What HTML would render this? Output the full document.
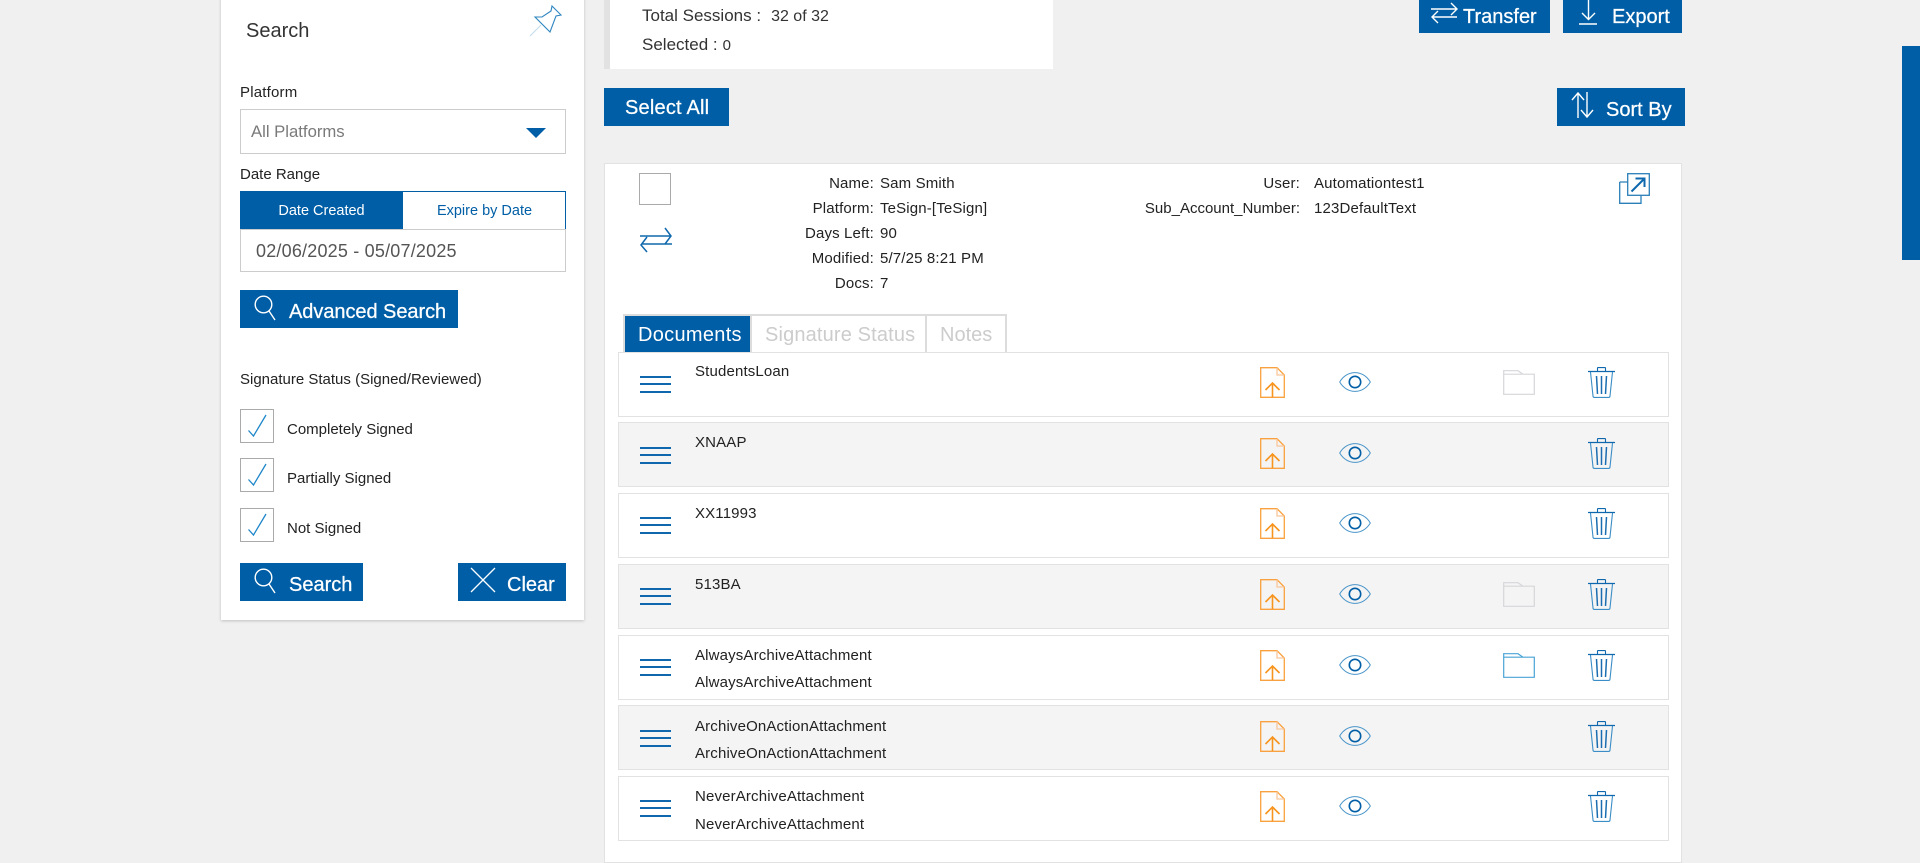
<!DOCTYPE html>
<html><head><meta charset="utf-8"><title>Sessions</title>
<style>
html,body{margin:0;padding:0;width:1920px;height:847px;overflow:hidden;background:#f0f0f0;font-family:"Liberation Sans",sans-serif;color:#222}
.a{position:absolute;box-sizing:border-box}
.t{position:absolute;white-space:nowrap;font-size:15px;line-height:20px;height:20px;letter-spacing:.15px;margin-top:1px}
.s{letter-spacing:0}
.b{position:absolute;background:#005ea6}
.w{color:#fff;font-size:20px;line-height:24px;height:24px;letter-spacing:0;-webkit-text-stroke:.25px #fff;margin-top:0}
.tb{font-size:20px;line-height:24px;height:24px;letter-spacing:.15px;margin-top:0}
svg{position:absolute;overflow:visible}
.row{position:absolute;left:618px;width:1051px;height:65px;box-sizing:border-box;border:1.5px solid #e2e2e2;background:#fff}
.alt{background:#f4f4f4}
.hl{position:absolute;left:640px;width:31px;height:2px;background:#0f68ad}
.cb{position:absolute;left:240px;width:34px;height:34px;box-sizing:border-box;border:1.5px solid #aaa;background:#fff}
</style></head><body>
<svg width="0" height="0" style="position:absolute"><defs>
<symbol id="doc" viewBox="0 0 25 31"><path d="M.7.7H17L24.3 8V30.3H.7Z" fill="none" stroke="#f9a13e" stroke-width="1.3"/><path d="M17 .7V8H24.3" fill="none" stroke="#fbc79a" stroke-width="1.3"/><path d="M12.5 30V16M5.5 23L12.5 16L19.5 23" fill="none" stroke="#f7941d" stroke-width="1.6"/></symbol>
<symbol id="eye" viewBox="0 0 32 20"><path d="M.7 10C8-2.5 24-2.5 31.300 10C24 22.500 8 22.500 .7 10Z" fill="none" stroke="#4a95c9" stroke-width="1"/><circle cx="16" cy="10" r="5.700" fill="none" stroke="#005ea6" stroke-width="1.600"/></symbol>
<symbol id="tr" viewBox="0 0 27 31"><path d="M0 4.500H27" stroke="#0f68ad" stroke-width="1.200" fill="none"/><path d="M9.500 4V1.200Q9.500.6 10 .6H17Q17.500.6 17.500 1.200V4" stroke="#0f68ad" stroke-width="1.100" fill="none"/><path d="M2.500 5L5 29Q5 30.400 6.500 30.400H20.500Q22 30.400 22 29L24.500 5" stroke="#3a8dc6" stroke-width="1.100" fill="none"/><path d="M8.500 9L9.500 27M13.500 9V27M18.500 9L17.500 27" stroke="#1a6db0" stroke-width="1.500" fill="none"/></symbol>
<symbol id="fold" viewBox="0 0 32 25"><path d="M.7 .7H15L20 4.200H31.300V24.300H.7ZM.7 4.200H20" fill="none" stroke="currentColor" stroke-width="1.200"/></symbol>
<symbol id="chk" viewBox="0 0 34 34"><path d="M8.500 21.500L13.500 27L26 6" fill="none" stroke="#1d86c9" stroke-width="1.300"/></symbol>
<symbol id="mag" viewBox="0 0 22 26"><circle cx="9.500" cy="9.500" r="8.300" fill="none" stroke="#fff" stroke-width="1.400"/><path d="M15 16L21 25" stroke="#fff" stroke-width="1.400"/></symbol>
</defs></svg>

<!-- scrollbar -->
<div class="a" style="left:1902px;top:46px;width:18px;height:214px;background:#005ea6"></div>

<!-- sidebar -->
<div class="a" style="left:221px;top:-5px;width:363px;height:625px;background:#fff;box-shadow:0 1px 3px rgba(0,0,0,.2)"></div>
<div class="t" style="left:246px;top:18px;font-size:20px;line-height:24px;height:24px;color:#333;letter-spacing:0">Search</div>
<svg style="left:530px;top:5px" width="34" height="33" viewBox="0 0 34 33"><path d="M0 31L11 20" stroke="#c4dcec" stroke-width="1.100" fill="none"/><path d="M5 12H12L21 6L22 1L31 10L26 11L20 27Z" fill="none" stroke="#2e86c1" stroke-width="1.100"/></svg>
<div class="t" style="left:240px;top:82px;letter-spacing:.2px">Platform</div>
<div class="a" style="left:240px;top:109px;width:326px;height:45px;border:1.500px solid #ccc;background:#fff"></div>
<div class="t" style="left:251px;top:122px;margin-top:0;font-size:16.700px;letter-spacing:0;color:#7a7a7a">All Platforms</div>
<div class="a" style="left:526px;top:128px;width:0;height:0;border-left:10px solid transparent;border-right:10px solid transparent;border-top:10px solid #005ea6"></div>
<div class="t s" style="left:240px;top:164px">Date Range</div>
<div class="b" style="left:240px;top:191px;width:163px;height:38px"></div>
<div class="a" style="left:403px;top:191px;width:163px;height:38px;border:1px solid #005ea6;border-left:0;border-bottom:0;background:#fff"></div>
<div class="t" style="left:240px;top:200px;width:163px;text-align:center;color:#fff;font-size:14.500px;letter-spacing:0">Date Created</div>
<div class="t" style="left:403px;top:200px;width:163px;text-align:center;color:#005ea6;font-size:14.500px;letter-spacing:0">Expire by Date</div>
<div class="a" style="left:240px;top:229px;width:326px;height:43px;border:1.500px solid #ccc;border-top-width:1px;background:#fff"></div>
<div class="t" style="left:256px;top:241px;margin-top:0;font-size:18px;letter-spacing:.2px;color:#555">02/06/2025 - 05/07/2025</div>
<div class="b" style="left:240px;top:290px;width:218px;height:38px"></div>
<svg style="left:254px;top:295px" width="22" height="26"><use href="#mag"/></svg>
<div class="t w" style="left:289px;top:300px;letter-spacing:-.05px">Advanced Search</div>
<div class="t s" style="left:240px;top:369px">Signature Status (Signed/Reviewed)</div>
<div class="cb" style="top:409px"></div><svg style="left:240px;top:409px" width="34" height="34"><use href="#chk"/></svg>
<div class="t s" style="left:287px;top:419px">Completely Signed</div>
<div class="cb" style="top:458px"></div><svg style="left:240px;top:458px" width="34" height="34"><use href="#chk"/></svg>
<div class="t s" style="left:287px;top:468px">Partially Signed</div>
<div class="cb" style="top:508px"></div><svg style="left:240px;top:508px" width="34" height="34"><use href="#chk"/></svg>
<div class="t s" style="left:287px;top:518px">Not Signed</div>
<div class="b" style="left:240px;top:563px;width:123px;height:38px"></div>
<svg style="left:254px;top:568px" width="22" height="26"><use href="#mag"/></svg>
<div class="t w" style="left:289px;top:573px">Search</div>
<div class="b" style="left:458px;top:563px;width:108px;height:38px"></div>
<svg style="left:470px;top:567px" width="26" height="26"><path d="M1 1L25 25M25 1L1 25" stroke="#fff" stroke-width="1.300" fill="none"/></svg>
<div class="t w" style="left:507px;top:573px">Clear</div>

<!-- summary -->
<div class="a" style="left:604px;top:-5px;width:449px;height:74px;background:#fff;border-left:6px solid #e2e2e2"></div>
<div class="t" style="left:642px;top:5px;margin-top:0;font-size:17px;line-height:22px;height:22px;letter-spacing:0;color:#333">Total Sessions :<span style="font-size:16px;margin-left:10px">32 of 32</span></div>
<div class="t" style="left:642px;top:34px;margin-top:0;font-size:17px;line-height:22px;height:22px;letter-spacing:0;color:#333">Selected :<span style="font-size:15px;margin-left:5px">0</span></div>

<!-- top buttons -->
<div class="b" style="left:1419px;top:-2px;width:131px;height:35px"></div>
<svg style="left:1431px;top:2px" width="27" height="22" viewBox="0 0 27 22" fill="none" stroke="#fff" stroke-width="1.400"><path d="M0 7H25M20 1L26 7L20 13M26 15H1M7 9L1 15L7 21"/></svg>
<div class="t w" style="left:1463px;top:5px">Transfer</div>
<div class="b" style="left:1563px;top:-2px;width:119px;height:35px"></div>
<svg style="left:1579px;top:0" width="19" height="25" viewBox="0 0 19 25" fill="none" stroke="#fff" stroke-width="1.400"><path d="M9.500 0V19M3 13L9.500 19.500L16 13M0 24H18"/></svg>
<div class="t w" style="left:1612px;top:5px">Export</div>
<div class="b" style="left:604px;top:88px;width:125px;height:38px"></div>
<div class="t w" style="left:625px;top:96px;letter-spacing:.2px">Select All</div>
<div class="b" style="left:1557px;top:88px;width:128px;height:38px"></div>
<svg style="left:1571px;top:92px" width="23" height="26" viewBox="0 0 23 26" fill="none" stroke="#fff" stroke-width="1.400"><path d="M7 26V1M1 8L7 1L13 8M16 0V25M10 18L16 25L22 18"/></svg>
<div class="t w" style="left:1606px;top:98px">Sort By</div>

<!-- main card -->
<div class="a" style="left:604px;top:163px;width:1078px;height:700px;background:#fff;border:1.500px solid #e2e2e2"></div>
<div class="a" style="left:639px;top:173px;width:32px;height:32px;border:1.500px solid #aaa;background:#fff"></div>
<svg style="left:640px;top:227px" width="32" height="26" viewBox="0 0 32 26" fill="none" stroke="#0f68ad" stroke-width="1.500"><path d="M0 9H30M25 1L31 9L25 17M32 17H2M7 10L1 18L7 25"/></svg>

<div class="t" style="left:700px;top:173px;width:174px;text-align:right">Name:</div><div class="t" style="left:880px;top:173px">Sam Smith</div>
<div class="t" style="left:700px;top:198px;width:174px;text-align:right">Platform:</div><div class="t" style="left:880px;top:198px">TeSign-[TeSign]</div>
<div class="t" style="left:700px;top:223px;width:174px;text-align:right">Days Left:</div><div class="t" style="left:880px;top:223px">90</div>
<div class="t" style="left:700px;top:248px;width:174px;text-align:right">Modified:</div><div class="t" style="left:880px;top:248px">5/7/25 8:21 PM</div>
<div class="t" style="left:700px;top:273px;width:174px;text-align:right">Docs:</div><div class="t" style="left:880px;top:273px">7</div>
<div class="t" style="left:1100px;top:173px;width:200px;text-align:right">User:</div><div class="t" style="left:1314px;top:173px">Automationtest1</div>
<div class="t s" style="left:1100px;top:198px;width:200px;text-align:right">Sub_Account_Number:</div><div class="t" style="left:1314px;top:198px">123DefaultText</div>
<svg style="left:1619px;top:173px" width="31" height="31" viewBox="0 0 31 31" fill="none"><path d="M.7 9H9M.7 9V30.300H22V22" stroke="#2b7fb8" stroke-width="1.300"/><rect x="8.700" y=".7" width="21.600" height="21.600" stroke="#2b7fb8" stroke-width="1.300"/><path d="M12.500 18.500L25.500 5.500M16.500 5.500H25.500V14" stroke="#0f68ad" stroke-width="2"/></svg>

<!-- tabs -->
<div class="a" style="left:623px;top:314px;width:384px;height:39px;background:#fff;border:2px solid #dcdcdc;border-bottom:0"></div>
<div class="b" style="left:625px;top:316px;width:125px;height:36px"></div>
<div class="a" style="left:750px;top:316px;width:2px;height:36px;background:#dcdcdc"></div>
<div class="a" style="left:925px;top:316px;width:2px;height:36px;background:#dcdcdc"></div>
<div class="t tb" style="left:638px;top:323px;color:#fff;letter-spacing:.3px">Documents</div>
<div class="t tb" style="left:765px;top:323px;color:#ccc">Signature Status</div>
<div class="t tb" style="left:940px;top:323px;color:#ccc;letter-spacing:0">Notes</div>

<!-- rows -->
<div class="row" style="top:352px"></div>
<div class="hl" style="top:376px"></div><div class="hl" style="top:383px"></div><div class="hl" style="top:391px"></div>
<div class="t" style="left:695px;top:361px">StudentsLoan</div>
<svg style="left:1260px;top:367px" width="25" height="31"><use href="#doc"/></svg>
<svg style="left:1339px;top:372px" width="32" height="20"><use href="#eye"/></svg>
<svg style="left:1503px;top:370px;color:#d6d6da" width="32" height="25"><use href="#fold"/></svg>
<svg style="left:1588px;top:367px" width="27" height="31"><use href="#tr"/></svg>

<div class="row alt" style="top:422px"></div>
<div class="hl" style="top:447px"></div><div class="hl" style="top:454px"></div><div class="hl" style="top:462px"></div>
<div class="t" style="left:695px;top:432px">XNAAP</div>
<svg style="left:1260px;top:438px" width="25" height="31"><use href="#doc"/></svg>
<svg style="left:1339px;top:443px" width="32" height="20"><use href="#eye"/></svg>
<svg style="left:1588px;top:438px" width="27" height="31"><use href="#tr"/></svg>

<div class="row" style="top:493px"></div>
<div class="hl" style="top:517px"></div><div class="hl" style="top:524px"></div><div class="hl" style="top:532px"></div>
<div class="t" style="left:695px;top:503px">XX11993</div>
<svg style="left:1260px;top:508px" width="25" height="31"><use href="#doc"/></svg>
<svg style="left:1339px;top:513px" width="32" height="20"><use href="#eye"/></svg>
<svg style="left:1588px;top:508px" width="27" height="31"><use href="#tr"/></svg>

<div class="row alt" style="top:564px"></div>
<div class="hl" style="top:588px"></div><div class="hl" style="top:595px"></div><div class="hl" style="top:603px"></div>
<div class="t" style="left:695px;top:574px">513BA</div>
<svg style="left:1260px;top:579px" width="25" height="31"><use href="#doc"/></svg>
<svg style="left:1339px;top:584px" width="32" height="20"><use href="#eye"/></svg>
<svg style="left:1503px;top:582px;color:#d6d6da" width="32" height="25"><use href="#fold"/></svg>
<svg style="left:1588px;top:579px" width="27" height="31"><use href="#tr"/></svg>

<div class="row" style="top:635px"></div>
<div class="hl" style="top:659px"></div><div class="hl" style="top:666px"></div><div class="hl" style="top:674px"></div>
<div class="t" style="left:695px;top:645px">AlwaysArchiveAttachment</div>
<div class="t" style="left:695px;top:672px">AlwaysArchiveAttachment</div>
<svg style="left:1260px;top:650px" width="25" height="31"><use href="#doc"/></svg>
<svg style="left:1339px;top:655px" width="32" height="20"><use href="#eye"/></svg>
<svg style="left:1503px;top:653px;color:#4aa3d6" width="32" height="25"><use href="#fold"/></svg>
<svg style="left:1588px;top:650px" width="27" height="31"><use href="#tr"/></svg>

<div class="row alt" style="top:705px"></div>
<div class="hl" style="top:730px"></div><div class="hl" style="top:737px"></div><div class="hl" style="top:745px"></div>
<div class="t" style="left:695px;top:716px">ArchiveOnActionAttachment</div>
<div class="t" style="left:695px;top:743px">ArchiveOnActionAttachment</div>
<svg style="left:1260px;top:721px" width="25" height="31"><use href="#doc"/></svg>
<svg style="left:1339px;top:726px" width="32" height="20"><use href="#eye"/></svg>
<svg style="left:1588px;top:721px" width="27" height="31"><use href="#tr"/></svg>

<div class="row" style="top:776px"></div>
<div class="hl" style="top:800px"></div><div class="hl" style="top:807px"></div><div class="hl" style="top:815px"></div>
<div class="t" style="left:695px;top:786px">NeverArchiveAttachment</div>
<div class="t" style="left:695px;top:814px">NeverArchiveAttachment</div>
<svg style="left:1260px;top:791px" width="25" height="31"><use href="#doc"/></svg>
<svg style="left:1339px;top:796px" width="32" height="20"><use href="#eye"/></svg>
<svg style="left:1588px;top:791px" width="27" height="31"><use href="#tr"/></svg>
</body></html>
